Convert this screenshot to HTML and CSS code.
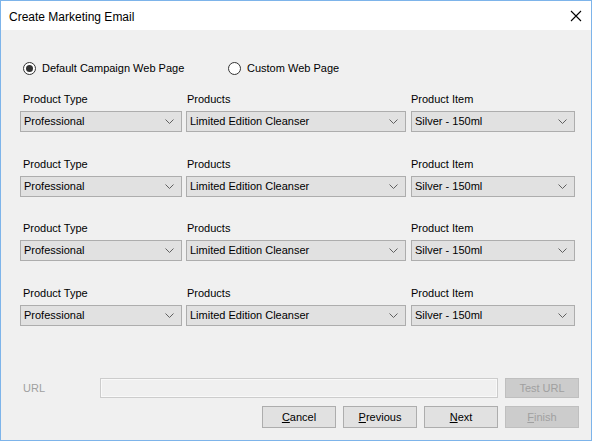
FILE: index.html
```html
<!DOCTYPE html>
<html>
<head>
<meta charset="utf-8">
<link rel="stylesheet" href="styles.css">
</head>
<body>
<div class="window">
  <div class="titlebar">
    <span class="title">Create Marketing Email</span>
    <svg class="close" width="12" height="12" viewBox="0 0 12 12"><path d="M1 1 L11 11 M11 1 L1 11" stroke="#000" stroke-width="1.1" fill="none"/></svg>
  </div>
  <div class="content">
    <div class="radios">
      <label class="radio radio-first"><span class="dot checked"></span><span>Default Campaign Web Page</span></label>
      <label class="radio"><span class="dot"></span><span>Custom Web Page</span></label>
    </div>
    <div class="groups">
      <div class="group">
        <div class="field f1"><div class="lbl">Product Type</div><div class="combo w1"><span>Professional</span><svg width="9" height="5" viewBox="0 0 9 5"><polyline points="0.5,0.5 4.5,4.5 8.5,0.5" fill="none" stroke="#606060" stroke-width="1"/></svg></div></div>
        <div class="field f2"><div class="lbl">Products</div><div class="combo w2"><span>Limited Edition Cleanser</span><svg width="9" height="5" viewBox="0 0 9 5"><polyline points="0.5,0.5 4.5,4.5 8.5,0.5" fill="none" stroke="#606060" stroke-width="1"/></svg></div></div>
        <div class="field f3"><div class="lbl">Product Item</div><div class="combo w3"><span>Silver - 150ml</span><svg width="9" height="5" viewBox="0 0 9 5"><polyline points="0.5,0.5 4.5,4.5 8.5,0.5" fill="none" stroke="#606060" stroke-width="1"/></svg></div></div>
      </div>
      <div class="group">
        <div class="field f1"><div class="lbl">Product Type</div><div class="combo w1"><span>Professional</span><svg width="9" height="5" viewBox="0 0 9 5"><polyline points="0.5,0.5 4.5,4.5 8.5,0.5" fill="none" stroke="#606060" stroke-width="1"/></svg></div></div>
        <div class="field f2"><div class="lbl">Products</div><div class="combo w2"><span>Limited Edition Cleanser</span><svg width="9" height="5" viewBox="0 0 9 5"><polyline points="0.5,0.5 4.5,4.5 8.5,0.5" fill="none" stroke="#606060" stroke-width="1"/></svg></div></div>
        <div class="field f3"><div class="lbl">Product Item</div><div class="combo w3"><span>Silver - 150ml</span><svg width="9" height="5" viewBox="0 0 9 5"><polyline points="0.5,0.5 4.5,4.5 8.5,0.5" fill="none" stroke="#606060" stroke-width="1"/></svg></div></div>
      </div>
      <div class="group">
        <div class="field f1"><div class="lbl">Product Type</div><div class="combo w1"><span>Professional</span><svg width="9" height="5" viewBox="0 0 9 5"><polyline points="0.5,0.5 4.5,4.5 8.5,0.5" fill="none" stroke="#606060" stroke-width="1"/></svg></div></div>
        <div class="field f2"><div class="lbl">Products</div><div class="combo w2"><span>Limited Edition Cleanser</span><svg width="9" height="5" viewBox="0 0 9 5"><polyline points="0.5,0.5 4.5,4.5 8.5,0.5" fill="none" stroke="#606060" stroke-width="1"/></svg></div></div>
        <div class="field f3"><div class="lbl">Product Item</div><div class="combo w3"><span>Silver - 150ml</span><svg width="9" height="5" viewBox="0 0 9 5"><polyline points="0.5,0.5 4.5,4.5 8.5,0.5" fill="none" stroke="#606060" stroke-width="1"/></svg></div></div>
      </div>
      <div class="group">
        <div class="field f1"><div class="lbl">Product Type</div><div class="combo w1"><span>Professional</span><svg width="9" height="5" viewBox="0 0 9 5"><polyline points="0.5,0.5 4.5,4.5 8.5,0.5" fill="none" stroke="#606060" stroke-width="1"/></svg></div></div>
        <div class="field f2"><div class="lbl">Products</div><div class="combo w2"><span>Limited Edition Cleanser</span><svg width="9" height="5" viewBox="0 0 9 5"><polyline points="0.5,0.5 4.5,4.5 8.5,0.5" fill="none" stroke="#606060" stroke-width="1"/></svg></div></div>
        <div class="field f3"><div class="lbl">Product Item</div><div class="combo w3"><span>Silver - 150ml</span><svg width="9" height="5" viewBox="0 0 9 5"><polyline points="0.5,0.5 4.5,4.5 8.5,0.5" fill="none" stroke="#606060" stroke-width="1"/></svg></div></div>
      </div>
    </div>
    <div class="url-row">
      <span class="url-label">URL</span>
      <div class="textbox"></div>
      <div class="btn disabled">Test URL</div>
    </div>
    <div class="buttons">
      <div class="btn"><u>C</u>ancel</div>
      <div class="btn"><u>P</u>revious</div>
      <div class="btn"><u>N</u>ext</div>
      <div class="btn disabled"><u>F</u>inish</div>
    </div>
  </div>
</div>
</body>
</html>
```

FILE: styles.css
```css
html, body {
  margin: 0;
  padding: 0;
}
body {
  font-family: "Liberation Sans", Arial, sans-serif;
  font-size: 11px;
  color: #000;
}
.window {
  width: 592px;
  height: 441px;
  box-sizing: border-box;
  border: 1px solid #7db4ea;
  background: #f0f0f0;
  display: flex;
  flex-direction: column;
}
.titlebar {
  height: 29px;
  background: #fff;
  display: flex;
  align-items: center;
  justify-content: space-between;
  padding: 0 9px 0 8px;
  flex: none;
}
.title {
  font-size: 12px;
  line-height: 14px;
  margin-top: 2px;
}
.close {
  margin-top: 1px;
  display: block;
}
.content {
  flex: 1;
  display: flex;
  flex-direction: column;
  padding: 32px 12px 12px 19px;
}
.radios {
  display: flex;
  height: 13px;
}
.radio {
  display: flex;
  align-items: center;
  gap: 6px;
  line-height: 13px;
  padding-left: 3px;
}
.radio-first {
  width: 202px;
}
.dot {
  width: 13px;
  height: 13px;
  box-sizing: border-box;
  border: 1px solid #333;
  border-radius: 50%;
  background: #fff;
  display: flex;
  align-items: center;
  justify-content: center;
}
.dot.checked::after {
  content: "";
  width: 7px;
  height: 7px;
  border-radius: 50%;
  background: #333;
}
.groups {
  display: flex;
  flex-direction: column;
  gap: 24.5px;
  margin-top: 17px;
}
.group {
  display: grid;
  grid-template-columns: 166px 225px 164px;
}
.lbl {
  line-height: 14px;
  margin-bottom: 5px;
}
.f1 .lbl { padding-left: 3px; }
.f2 .lbl { padding-left: 1px; }
.combo {
  height: 21px;
  box-sizing: border-box;
  border: 1px solid #adadad;
  background: #e1e1e1;
  display: flex;
  align-items: center;
  justify-content: space-between;
  padding: 0 7px 0 3px;
  line-height: 19px;
}
.combo svg {
  display: block;
}
.w1 { width: 162px; }
.w2 { width: 220px; }
.w3 { width: 164px; }
.url-row {
  margin-top: auto;
  display: flex;
  align-items: center;
  gap: 7px;
  height: 20px;
}
.url-label {
  width: 70px;
  padding-left: 3px;
  color: #a0a0a0;
}
.textbox {
  flex: 1;
  height: 20px;
  box-sizing: border-box;
  border: 1px solid #cccccc;
  background: #f0f0f0;
  box-shadow: inset 0 0 0 1px #f9f9f9;
}
.buttons {
  display: flex;
  justify-content: flex-end;
  gap: 7px;
  margin-top: 8px;
}
.btn {
  width: 74px;
  height: 22px;
  box-sizing: border-box;
  border: 1px solid #adadad;
  background: #e1e1e1;
  display: flex;
  align-items: center;
  justify-content: center;
  line-height: 14px;
  flex: none;
}
.url-row .btn {
  height: 20px;
}
.btn.disabled {
  background: #cccccc;
  border-color: #bfbfbf;
  color: #a0a0a0;
}
.btn u {
  text-decoration-thickness: 1px;
}
```
